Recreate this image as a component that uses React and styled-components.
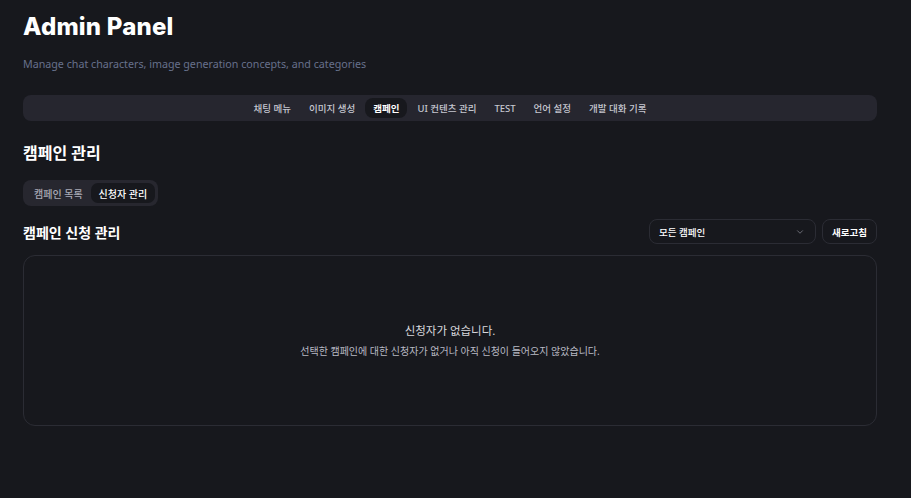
import React from "react";
import styled, { createGlobalStyle } from "styled-components";

const Global = createGlobalStyle`
  html, body { margin: 0; padding: 0; background: #17181d; }
  body { font-family: "Noto Sans", "Noto Sans CJK KR", sans-serif; color: #f4f4f5; }
  * { box-sizing: border-box; }
`;

const Page = styled.div`
  min-height: 498px;
  background: #17181d;
  padding: 12px 34px 40px 23px;
  display: flex;
  flex-direction: column;
`;

const Title = styled.h1`
  margin: 0;
  font-family: "Inter", sans-serif;
  font-weight: 800;
  font-size: 24px;
  line-height: 30px;
  letter-spacing: 0.2px;
  color: #ffffff;
`;

const Subtitle = styled.p`
  margin: 14px 0 0;
  font-size: 10.7px;
  line-height: 16px;
  color: #67718c;
`;

const Nav = styled.nav`
  margin-top: 23px;
  height: 26px;
  background: #26262f;
  border-radius: 8px;
  display: flex;
  align-items: center;
  justify-content: center;
  gap: 2px;
`;

const NavItem = styled.div`
  height: 20px;
  padding: 0 8px;
  border-radius: 8px;
  display: flex;
  align-items: center;
  font-size: 9.5px;
  font-weight: ${(p) => (p.$active ? 700 : 500)};
  color: ${(p) => (p.$active ? "#ffffff" : "#c5c6cf")};
  background: ${(p) => (p.$active ? "#17181d" : "transparent")};
  white-space: nowrap;
`;

const SectionTitle = styled.h2`
  margin: 21px 0 0;
  font-size: 16px;
  line-height: 22px;
  font-weight: 700;
  color: #ffffff;
`;

const SubTabs = styled.div`
  margin-top: 16px;
  align-self: flex-start;
  height: 26px;
  padding: 3px;
  background: #27272f;
  border-radius: 8px;
  display: flex;
  align-items: center;
`;

const SubTab = styled.div`
  height: 20px;
  padding: 0 8px;
  border-radius: 7px;
  display: flex;
  align-items: center;
  font-size: 10px;
  font-weight: 500;
  color: ${(p) => (p.$active ? "#ffffff" : "#a9aab5")};
  background: ${(p) => (p.$active ? "#17181d" : "transparent")};
`;

const Toolbar = styled.div`
  margin-top: 13px;
  display: flex;
  align-items: center;
  justify-content: space-between;
`;

const ToolTitle = styled.h3`
  margin: 0;
  font-size: 14px;
  font-weight: 700;
  color: #ffffff;
`;

const Controls = styled.div`
  display: flex;
  align-items: center;
  gap: 6px;
`;

const Select = styled.div`
  width: 167px;
  height: 25px;
  border: 1px solid #2b2c34;
  border-radius: 8px;
  padding: 0 10px 0 9px;
  display: flex;
  align-items: center;
  justify-content: space-between;
  font-size: 9.5px;
  font-weight: 500;
  color: #ffffff;
`;

const Button = styled.div`
  height: 25px;
  padding: 0 9px;
  border: 1px solid #2b2c34;
  border-radius: 8px;
  display: flex;
  align-items: center;
  font-size: 9.5px;
  font-weight: 600;
  color: #ffffff;
`;

const Card = styled.div`
  margin-top: 11px;
  height: 171px;
  border: 1px solid #2b2c34;
  border-radius: 12px;
  display: flex;
  flex-direction: column;
  align-items: center;
  justify-content: center;
`;

const EmptyTitle = styled.div`
  font-size: 11.5px;
  color: #d7d8de;
  line-height: 16px;
`;

const EmptyText = styled.div`
  margin-top: 6px;
  font-size: 10px;
  color: #b9bac4;
  line-height: 13px;
`;

export default function App() {
  const tabs = ["채팅 메뉴", "이미지 생성", "캠페인", "UI 컨텐츠 관리", "TEST", "언어 설정", "개발 대화 기록"];
  return (
    <>
      <Global />
      <Page>
        <Title>Admin Panel</Title>
        <Subtitle>Manage chat characters, image generation concepts, and categories</Subtitle>
        <Nav>
          {tabs.map((t) => (
            <NavItem key={t} $active={t === "캠페인"}>{t}</NavItem>
          ))}
        </Nav>
        <SectionTitle>캠페인 관리</SectionTitle>
        <SubTabs>
          <SubTab>캠페인 목록</SubTab>
          <SubTab $active>신청자 관리</SubTab>
        </SubTabs>
        <Toolbar>
          <ToolTitle>캠페인 신청 관리</ToolTitle>
          <Controls>
            <Select>
              <span>모든 캠페인</span>
              <svg width="10" height="10" viewBox="0 0 24 24" fill="none" stroke="#7b7c86" strokeWidth="2" strokeLinecap="round" strokeLinejoin="round">
                <path d="m6 9 6 6 6-6" />
              </svg>
            </Select>
            <Button>새로고침</Button>
          </Controls>
        </Toolbar>
        <Card>
          <EmptyTitle>신청자가 없습니다.</EmptyTitle>
          <EmptyText>선택한 캠페인에 대한 신청자가 없거나 아직 신청이 들어오지 않았습니다.</EmptyText>
        </Card>
      </Page>
    </>
  );
}
